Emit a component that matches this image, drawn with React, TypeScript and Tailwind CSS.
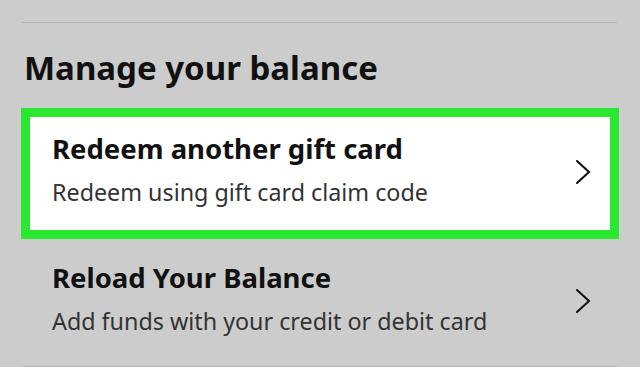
const font = { fontFamily: '"Noto Sans", "Liberation Sans", sans-serif' };

function Chevron() {
  return (
    <svg width="16" height="26" viewBox="0 0 16 26" fill="none" className="shrink-0">
      <polyline
        points="2,2 14,13 2,24"
        stroke="#111111"
        strokeWidth="2.1"
        strokeLinecap="round"
        strokeLinejoin="miter"
      />
    </svg>
  );
}

function Row({ title, subtitle }: { title: string; subtitle: string }) {
  return (
    <div className="flex items-center justify-between">
      <div className="flex flex-col">
        <span className="text-[27.5px] font-bold leading-[34px] text-[#111111]">{title}</span>
        <span className="mt-[11px] text-[23.3px] leading-[30px] text-[#333333]">{subtitle}</span>
      </div>
      <div className="mr-[19px] mt-[4px]">
        <Chevron />
      </div>
    </div>
  );
}

export default function App() {
  return (
    <div className="h-[367px] w-[640px] overflow-hidden bg-[#cccccc]" style={font}>
      <div className="ml-[22px] mr-[23px] mt-[22px] h-px bg-[#b3b3b3]" />
      <h1 className="mt-[25px] pl-[24px] text-[33px] font-bold leading-[40px] text-[#111111]">
        Manage your balance
      </h1>
      <div className="mx-[21px] mt-[20px] border-[9px] border-[#29e82f] bg-white pb-[23px] pl-[22px] pt-[15px]">
        <Row title="Redeem another gift card" subtitle="Redeem using gift card claim code" />
      </div>
      <div className="mx-[21px] pb-[30px] pl-[31px] pr-[9px] pt-[22px]">
        <Row title="Reload Your Balance" subtitle="Add funds with your credit or debit card" />
      </div>
      <div className="ml-[23px] mr-[23px] h-px bg-[#b3b3b3]" />
    </div>
  );
}
